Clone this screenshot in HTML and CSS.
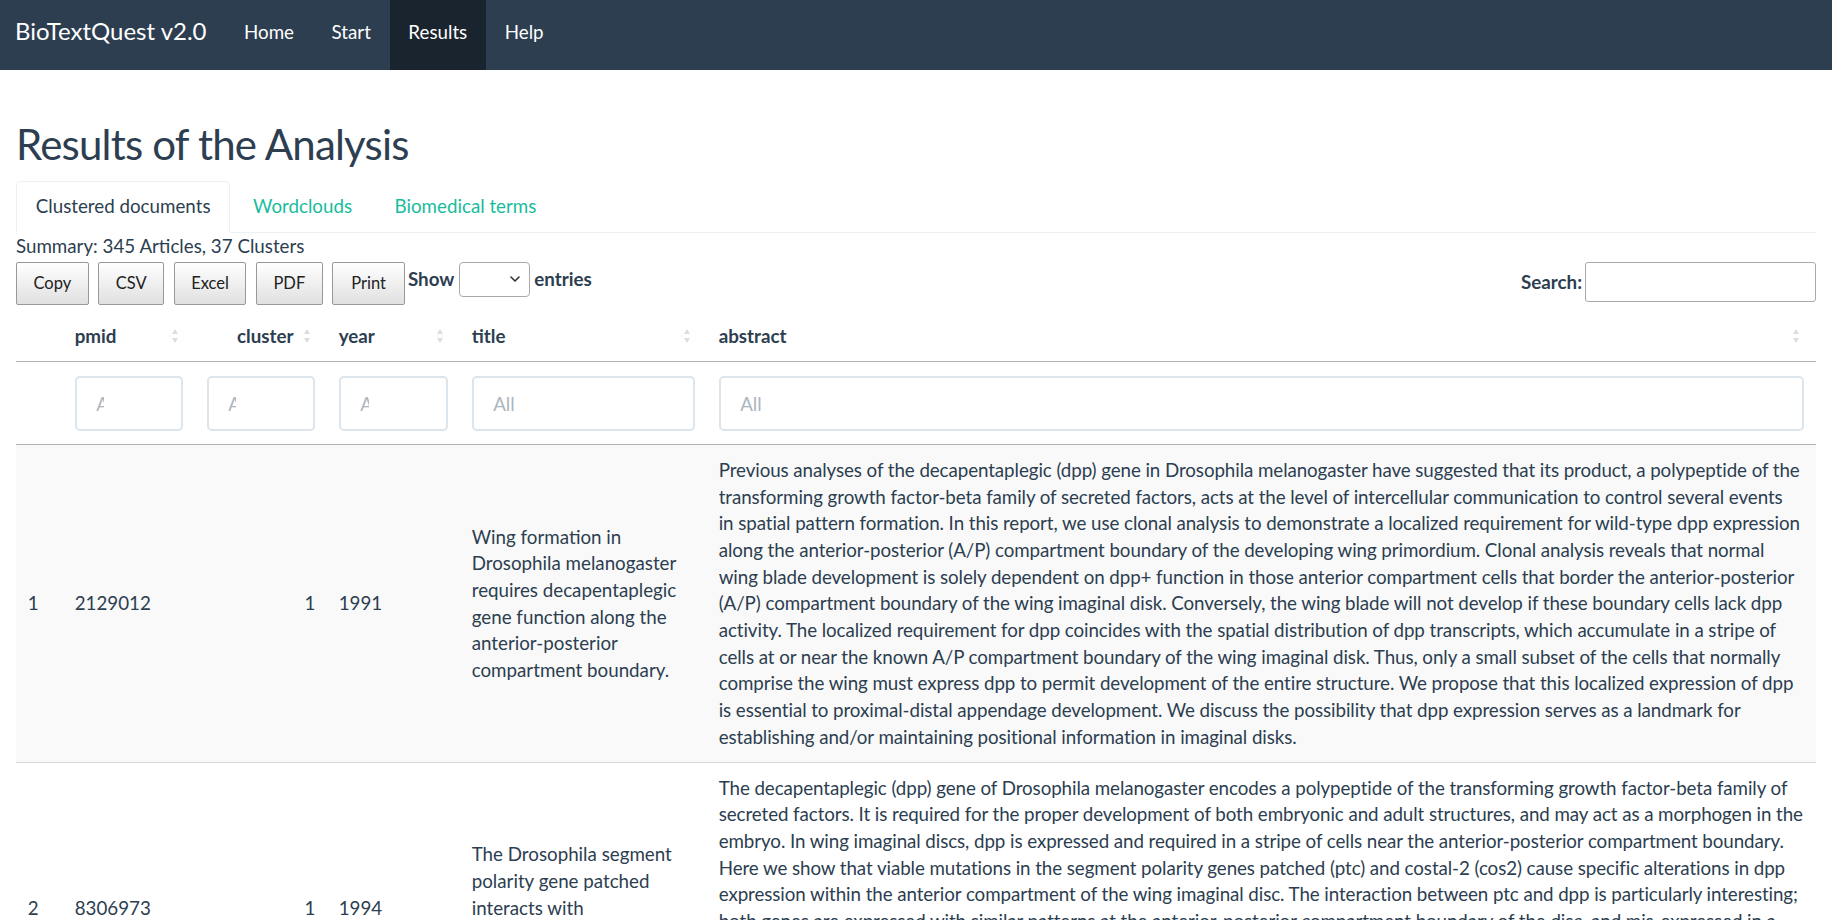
FILE: index.html
```html
<!DOCTYPE html>
<html lang="en">
<head>
<meta charset="utf-8">
<title>BioTextQuest v2.0 - Results</title>
<link rel="stylesheet" href="styles.css">
</head>
<body>
<nav class="navbar">
  <a class="brand" href="#">BioTextQuest v2.0</a>
  <ul class="nav">
    <li><a href="#">Home</a></li>
    <li><a href="#">Start</a></li>
    <li class="active"><a href="#">Results</a></li>
    <li><a href="#">Help</a></li>
  </ul>
</nav>
<main class="container">
  <h1 class="page-title">Results of the Analysis</h1>
  <ul class="tabs">
    <li class="active"><a href="#">Clustered documents</a></li>
    <li><a href="#">Wordclouds</a></li>
    <li><a href="#">Biomedical terms</a></li>
  </ul>
  <div class="summary">Summary: 345 Articles, 37 Clusters</div>
  <div class="dt-top">
    <div class="dt-buttons">
      <button class="dt-button">Copy</button>
      <button class="dt-button">CSV</button>
      <button class="dt-button">Excel</button>
      <button class="dt-button">PDF</button>
      <button class="dt-button print">Print</button>
    </div>
    <label class="dt-length">Show
      <span class="select"><svg width="10" height="6" viewBox="0 0 10 6"><path d="M1 1l4 4 4-4" fill="none" stroke="#333" stroke-width="1.6" stroke-linecap="round" stroke-linejoin="round"/></svg></span>
      entries</label>
    <label class="dt-search">Search:<input class="search-input" type="text"></label>
  </div>
  <table class="dt">
    <colgroup>
      <col class="c-idx"><col class="c-pmid"><col class="c-cluster"><col class="c-year"><col class="c-title"><col class="c-abstract">
    </colgroup>
    <thead>
      <tr class="head-row">
        <th></th>
        <th class="sort">pmid</th>
        <th class="sort num">cluster</th>
        <th class="sort">year</th>
        <th class="sort">title</th>
        <th class="sort">abstract</th>
      </tr>
      <tr class="filter-row">
        <td></td>
        <td><input class="filter narrow" type="text" placeholder="All"></td>
        <td><input class="filter narrow" type="text" placeholder="All"></td>
        <td><input class="filter narrow" type="text" placeholder="All"></td>
        <td><input class="filter" type="text" placeholder="All"></td>
        <td><input class="filter" type="text" placeholder="All"></td>
      </tr>
    </thead>
    <tbody>
      <tr class="odd">
        <td>1</td>
        <td>2129012</td>
        <td class="num">1</td>
        <td>1991</td>
        <td>Wing formation in Drosophila melanogaster requires decapentaplegic gene function along the anterior-posterior compartment boundary.</td>
        <td class="abstract">Previous analyses of the decapentaplegic (dpp) gene in Drosophila melanogaster have suggested that its product, a polypeptide of the<br>transforming growth factor-beta family of secreted factors, acts at the level of intercellular communication to control several events<br>in spatial pattern formation. In this report, we use clonal analysis to demonstrate a localized requirement for wild-type dpp expression<br>along the anterior-posterior (A/P) compartment boundary of the developing wing primordium. Clonal analysis reveals that normal<br>wing blade development is solely dependent on dpp+ function in those anterior compartment cells that border the anterior-posterior<br>(A/P) compartment boundary of the wing imaginal disk. Conversely, the wing blade will not develop if these boundary cells lack dpp<br>activity. The localized requirement for dpp coincides with the spatial distribution of dpp transcripts, which accumulate in a stripe of<br>cells at or near the known A/P compartment boundary of the wing imaginal disk. Thus, only a small subset of the cells that normally<br>comprise the wing must express dpp to permit development of the entire structure. We propose that this localized expression of dpp<br>is essential to proximal-distal appendage development. We discuss the possibility that dpp expression serves as a landmark for<br>establishing and/or maintaining positional information in imaginal disks.</td>
      </tr>
      <tr class="even">
        <td>2</td>
        <td>8306973</td>
        <td class="num">1</td>
        <td>1994</td>
        <td>The Drosophila segment polarity gene patched interacts with decapentaplegic in wing development.</td>
        <td class="abstract">The decapentaplegic (dpp) gene of Drosophila melanogaster encodes a polypeptide of the transforming growth factor-beta family of<br>secreted factors. It is required for the proper development of both embryonic and adult structures, and may act as a morphogen in the<br>embryo. In wing imaginal discs, dpp is expressed and required in a stripe of cells near the anterior-posterior compartment boundary.<br>Here we show that viable mutations in the segment polarity genes patched (ptc) and costal-2 (cos2) cause specific alterations in dpp<br>expression within the anterior compartment of the wing imaginal disc. The interaction between ptc and dpp is particularly interesting;<br>both genes are expressed with similar patterns at the anterior-posterior compartment boundary of the disc, and mis-expressed in a<br>similar way in ptc and cos2 mutant discs. These ectopic domains of dpp expression correlate with the appearance of pattern<br>duplications in the adult wing, suggesting that dpp acts downstream of ptc in the specification of positional information. We<br>propose that ptc restricts dpp expression to a narrow stripe of cells adjacent to the compartment boundary, and that ectopic dpp<br>expression is responsible for the pattern duplications observed in mutant wings.</td>
      </tr>
    </tbody>
  </table>
</main>
</body>
</html>
```

FILE: styles.css
```css
* {
  box-sizing: border-box;
}

html,
body {
  margin: 0;
  padding: 0;
}

body {
  font-family: Lato, "Noto Sans", "Liberation Sans", sans-serif;
  font-size: 18.75px;
  line-height: 26.8px;
  color: #2c3e50;
  background: #ffffff;
}

/* ---------- navbar ---------- */
.navbar {
  display: flex;
  align-items: stretch;
  height: 70px;
  background: #2c3e50;
  margin-bottom: 49px;
}

.brand {
  display: block;
  padding: 16.5px 18.75px 0 15px;
  font-size: 24px;
  line-height: 28px;
  color: #ffffff;
  text-decoration: none;
}

.nav {
  display: flex;
  list-style: none;
  margin: 0;
  padding: 0;
}

.nav a {
  display: block;
  height: 70px;
  padding: 18.5px 18.75px 0;
  line-height: 26.8px;
  color: #ffffff;
  text-decoration: none;
}

.nav .active a {
  background: #1a242f;
}

/* ---------- page ---------- */
.container {
  padding: 0 16px;
}

.page-title {
  margin: 0 0 12px;
  font-size: 42px;
  line-height: 50px;
  letter-spacing: -0.8px;
  font-weight: 400;
  color: #2c3e50;
}

.tabs {
  display: flex;
  list-style: none;
  margin: 0;
  padding: 0;
  border-bottom: 1px solid #ecf0f1;
}

.tabs li {
  margin-right: 3px;
  margin-bottom: -1px;
}

.tabs a {
  display: block;
  padding: 11.2px 18.75px 11.7px;
  line-height: 26.8px;
  border: 1px solid transparent;
  border-radius: 4.7px 4.7px 0 0;
  color: #18bc9c;
  text-decoration: none;
}

.tabs .active a {
  color: #2c3e50;
  background: #ffffff;
  border-color: #ecf0f1 #ecf0f1 transparent;
}

.summary {
  line-height: 26.8px;
}

/* ---------- datatable controls ---------- */
.dt-top {
  display: flex;
  align-items: flex-start;
  margin-top: 2.5px;
}

.dt-buttons {
  display: flex;
  gap: 9.5px;
}

.dt-button {
  font-family: inherit;
  font-size: 16.5px;
  line-height: 26.4px;
  padding: 7.4px 16.5px;
  border: 1px solid #999999;
  border-radius: 2px;
  color: #222222;
  background: linear-gradient(to bottom, #ffffff 0%, #e0e0e0 100%);
  cursor: pointer;
}

.dt-button.print {
  padding: 7.4px 18px;
}

.dt-length {
  display: flex;
  align-items: center;
  gap: 4.5px;
  margin-left: 3px;
  font-weight: 700;
}

.select {
  display: flex;
  align-items: center;
  justify-content: flex-end;
  width: 71px;
  height: 35px;
  padding-right: 9px;
  border: 1px solid #aaaaaa;
  border-radius: 4px;
  background: #ffffff;
}

.dt-search {
  display: flex;
  align-items: center;
  margin-left: auto;
  font-weight: 700;
}

.search-input {
  width: 231px;
  height: 40px;
  margin-left: 3px;
  padding: 5px;
  border: 1px solid #aaaaaa;
  border-radius: 3px;
  font: inherit;
  font-weight: 400;
  background: transparent;
}

/* ---------- table ---------- */
.dt {
  width: 100%;
  margin-top: 6px;
  table-layout: fixed;
  border-collapse: collapse;
  line-height: 26.7px;
}

.c-idx { width: 47px; }
.c-pmid { width: 132px; }
.c-cluster { width: 132px; }
.c-year { width: 133px; }
.c-title { width: 247px; }
.c-abstract { width: 1109px; }

.dt th {
  position: relative;
  padding: 12px 11.7px 11.5px;
  text-align: left;
  font-weight: 700;
  color: #2c3e50;
  border-bottom: 1px solid #b3b3b3;
}

.dt th.sort {
  padding-right: 30px;
}

.dt th.num {
  padding-right: 33.5px;
}

.dt th.num,
.dt td.num {
  text-align: right;
}

.dt th.sort::before,
.dt th.sort::after {
  content: "";
  position: absolute;
  right: 17.5px;
  width: 0;
  height: 0;
  border-left: 3px solid transparent;
  border-right: 3px solid transparent;
}

.dt th.sort::before {
  bottom: calc(50% + 2px);
  border-bottom: 5px solid #dedede;
}

.dt th.sort::after {
  top: calc(50% + 2px);
  border-top: 5px solid #dedede;
}

.filter-row td {
  padding: 13.5px 11.7px;
  border-bottom: 1px solid #b3b3b3;
}

.filter {
  display: block;
  width: 100%;
  height: 55px;
  padding: 0 0 0 19.5px;
  border: 2px solid #dce4ec;
  border-radius: 4.7px;
  font-family: inherit;
  font-size: 18.75px;
  color: #2c3e50;
  background: #ffffff;
}

.filter.narrow {
  padding-right: 77.5px;
}

.filter::placeholder {
  color: #acb6c0;
}

.dt tbody td {
  padding: 11.5px 11.7px;
  vertical-align: middle;
  border-top: 1px solid #d9d9d9;
}

.dt tbody td.abstract {
  white-space: nowrap;
  letter-spacing: -0.08px;
}

.dt tbody tr:first-child td {
  border-top: none;
}

.dt tbody tr.odd td {
  background: #f9f9f9;
}
```
